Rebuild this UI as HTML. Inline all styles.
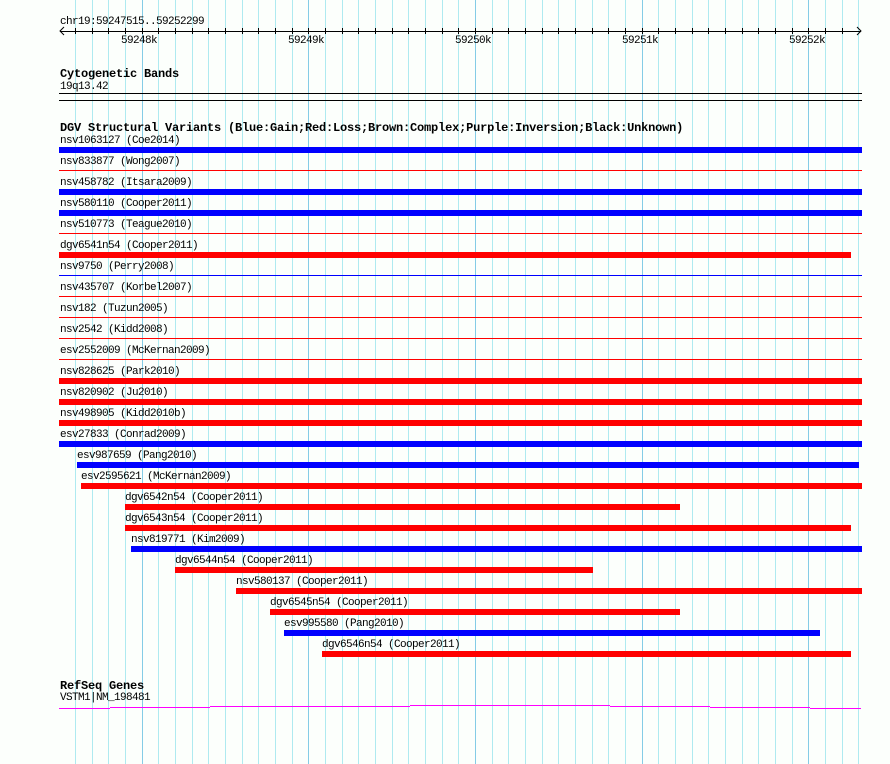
<!DOCTYPE html>
<html><head><meta charset="utf-8"><style>
body{margin:0;width:890px;height:764px;background:#fcfffc;position:relative;overflow:hidden;font-family:"Liberation Mono",monospace;font-size:11px;letter-spacing:-0.6px;color:#000}
.g{position:absolute;top:0;height:764px;width:1px;background:#aeeaf0}
.g.d{background:#84cce6}
.t{position:absolute;white-space:pre;line-height:12px}
.b{position:absolute;height:6px}
.l{position:absolute;height:1px}
.h{font-weight:bold;font-size:12px;letter-spacing:-0.2px}
.m{position:absolute;height:1px;background:#f0f}
</style></head><body>
<div id="grid"></div>
<script>
var s='';
for(var k=1;k<=48;k++){var x=Math.round(58.33+16.67*k);s+='<div class="g'+((k%10==5)?' d':'')+'" style="left:'+x+'px"></div>';}
document.getElementById('grid').innerHTML=s;
</script>
<div class="t" style="left:60px;top:16px">chr19:59247515..59252299</div>
<div class="l" style="left:60px;top:31px;width:801px;background:#000"></div>
<svg style="position:absolute;left:0;top:0" width="890" height="40">
<path d="M64 27 L60 31 L64 35 M857 27 L861 31 L857 35" stroke="#000" fill="none"/>
<g id="ticks" stroke="#000"></g>
</svg>
<script>
var t='';for(var k=1;k<=47;k++){var x=Math.round(58.33+16.67*k)+0.5;t+='<line x1="'+x+'" y1="28" x2="'+x+'" y2="34"/>';}
document.getElementById('ticks').innerHTML=t;
</script>
<div class="t" style="left:121px;top:35px">59248k</div>
<div class="t" style="left:288px;top:35px">59249k</div>
<div class="t" style="left:455px;top:35px">59250k</div>
<div class="t" style="left:622px;top:35px">59251k</div>
<div class="t" style="left:789px;top:35px">59252k</div>
<div class="t h" style="left:60px;top:68px">Cytogenetic Bands</div>
<div class="t" style="left:60px;top:81px">19q13.42</div>
<div class="l" style="left:59px;top:93px;width:803px;background:#000"></div>
<div class="l" style="left:59px;top:100px;width:803px;background:#000"></div>
<div class="t h" style="left:60px;top:122px">DGV Structural Variants (Blue:Gain;Red:Loss;Brown:Complex;Purple:Inversion;Black:Unknown)</div>
<div id="rows"></div>
<script>
var R=[
['nsv1063127 (Coe2014)',60,'B',59,862],
['nsv833877 (Wong2007)',60,'r',59,862],
['nsv458782 (Itsara2009)',60,'B',59,862],
['nsv580110 (Cooper2011)',60,'B',59,862],
['nsv510773 (Teague2010)',60,'r',59,862],
['dgv6541n54 (Cooper2011)',60,'R',59,851],
['nsv9750 (Perry2008)',60,'b',59,862],
['nsv435707 (Korbel2007)',60,'r',59,862],
['nsv182 (Tuzun2005)',60,'r',59,862],
['nsv2542 (Kidd2008)',60,'r',59,862],
['esv2552009 (McKernan2009)',60,'r',59,862],
['nsv828625 (Park2010)',60,'R',59,862],
['nsv820902 (Ju2010)',60,'R',59,862],
['nsv498905 (Kidd2010b)',60,'R',59,862],
['esv27833 (Conrad2009)',60,'B',59,862],
['esv987659 (Pang2010)',77,'B',77,859],
['esv2595621 (McKernan2009)',81,'R',81,862],
['dgv6542n54 (Cooper2011)',125,'R',125,680],
['dgv6543n54 (Cooper2011)',125,'R',125,851],
['nsv819771 (Kim2009)',131,'B',131,862],
['dgv6544n54 (Cooper2011)',175,'R',175,593],
['nsv580137 (Cooper2011)',236,'R',236,862],
['dgv6545n54 (Cooper2011)',270,'R',270,680],
['esv995580 (Pang2010)',284,'B',284,820],
['dgv6546n54 (Cooper2011)',322,'R',322,851]];
var h='';
R.forEach(function(r,i){
 h+='<div class="t" style="left:'+r[1]+'px;top:'+(135+21*i)+'px">'+r[0]+'</div>';
 var c=(r[2]=='B'||r[2]=='b')?'#0000ff':'#ff0000';
 if(r[2]=='B'||r[2]=='R') h+='<div class="b" style="left:'+r[3]+'px;width:'+(r[4]-r[3])+'px;top:'+(147+21*i)+'px;background:'+c+'"></div>';
 else h+='<div class="l" style="left:'+r[3]+'px;width:'+(r[4]-r[3])+'px;top:'+(170+21*(i-1))+'px;background:'+c+'"></div>';
});
document.getElementById('rows').innerHTML=h;
</script>
<div class="t h" style="left:60px;top:680px">RefSeq Genes</div>
<div class="t" style="left:60px;top:692px">VSTM1|NM_198481</div>
<div class="m" style="left:59px;top:708px;width:51px"></div>
<div class="m" style="left:110px;top:707px;width:100px"></div>
<div class="m" style="left:210px;top:706px;width:100px"></div>
<div class="m" style="left:310px;top:706px;width:100px"></div>
<div class="m" style="left:410px;top:705px;width:200px"></div>
<div class="m" style="left:610px;top:706px;width:100px"></div>
<div class="m" style="left:710px;top:707px;width:100px"></div>
<div class="m" style="left:810px;top:708px;width:51px"></div>
</body></html>
